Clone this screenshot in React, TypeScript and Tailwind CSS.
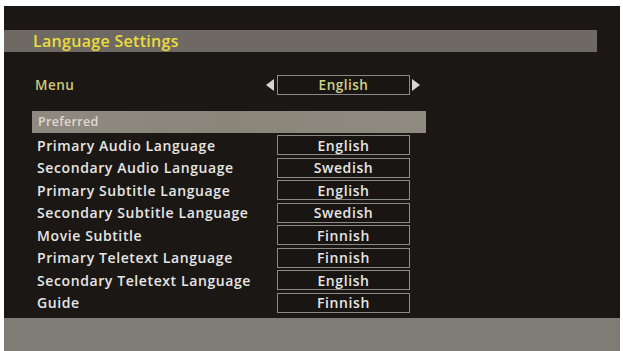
const rows: [string, string][] = [
  ["Primary Audio Language", "English"],
  ["Secondary Audio Language", "Swedish"],
  ["Primary Subtitle Language", "English"],
  ["Secondary Subtitle Language", "Swedish"],
  ["Movie Subtitle", "Finnish"],
  ["Primary Teletext Language", "Finnish"],
  ["Secondary Teletext Language", "English"],
  ["Guide", "Finnish"],
];

function ValueBox({ value, className = "" }: { value: string; className?: string }) {
  return (
    <div
      className={`flex h-[20px] w-[133px] items-center justify-center border border-[#8c8a86] bg-[#191513] ${className}`}
    >
      {value}
    </div>
  );
}

function Arrow({ dir }: { dir: "left" | "right" }) {
  return (
    <svg width="8" height="12" viewBox="0 0 8 12" className="shrink-0">
      {dir === "left" ? (
        <path d="M8 0 L0 6 L8 12 Z" fill="#d6d6d4" />
      ) : (
        <path d="M0 0 L8 6 L0 12 Z" fill="#d6d6d4" />
      )}
    </svg>
  );
}

export default function App() {
  return (
    <div className="h-[351px] w-[623px] overflow-hidden bg-white pl-[4px] pr-[3px] pt-[6px] font-['Open_Sans',sans-serif]">
      <div className="flex h-[345px] flex-col bg-[#1b1715]">
        {/* Title */}
        <div className="mt-[24px] flex h-[22px] w-[593px] items-center bg-[#6e6a63] pl-[29px] text-[16px] font-semibold tracking-[0.3px] text-[#ecdc3c]">
          Language Settings
        </div>

        {/* Menu row */}
        <div className="mt-[23px] flex h-[20px] items-center pl-[31px] text-[13.5px] font-semibold tracking-[0.5px]">
          <span className="w-[231px] text-[#cdc978]">Menu</span>
          <span className="mr-[3px]"><Arrow dir="left" /></span>
          <ValueBox value="English" className="text-[#d2d28a]" />
          <span className="ml-[2px]"><Arrow dir="right" /></span>
        </div>

        {/* Preferred */}
        <div className="ml-[28px] mt-[16px] flex h-[22px] w-[394px] items-center bg-gradient-to-r from-[#8e8a82] via-[#8a8579] to-[#8f8b80] pl-[6px] text-[12.5px] font-semibold tracking-[0.3px] text-[#e0d9cc]">
          Preferred
        </div>

        <div className="ml-[32px] mt-[2px] flex flex-col gap-[2.5px] text-[14px] font-semibold tracking-[0.6px] text-[#e6e6e4]">
          {rows.map(([label, value]) => (
            <div key={label} className="flex h-[20px] items-center">
              <span className="w-[241px] whitespace-nowrap pl-[1px]">{label}</span>
              <ValueBox value={value} />
            </div>
          ))}
        </div>

        <div className="mt-auto h-[33px] bg-[#7e7c74]" />
      </div>
    </div>
  );
}
